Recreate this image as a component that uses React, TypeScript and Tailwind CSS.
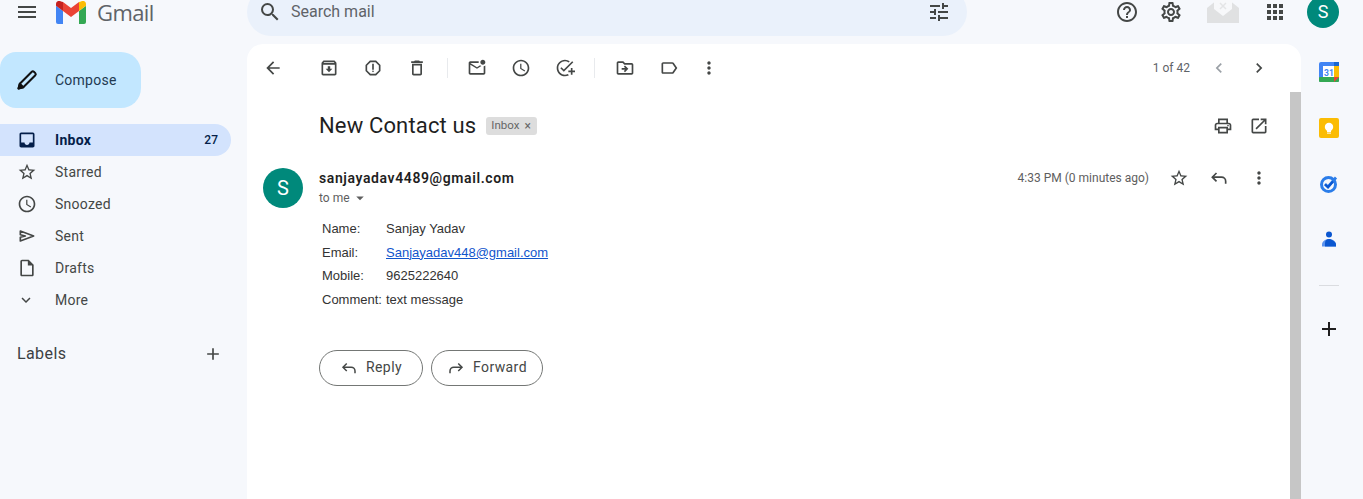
import React from "react";
import {
  MdMenu, MdSearch, MdTune, MdHelpOutline, MdOutlineSettings, MdApps, MdArrowBack, MdOutlineArchive,
  MdOutlineReport, MdOutlineDelete, MdOutlineMarkEmailUnread, MdOutlineWatchLater, MdOutlineAddTask,
  MdOutlineDriveFileMove, MdOutlineLabel, MdMoreVert, MdChevronLeft, MdChevronRight, MdOutlinePrint,
  MdOpenInNew, MdStarBorder, MdInbox, MdOutlineInsertDriveFile, MdExpandMore, MdAdd, MdArrowDropDown,
} from "react-icons/md";

const ReplyIcon = ({ size = 20, flip = false }: { size?: number; flip?: boolean }) => (
  <svg width={size} height={size} viewBox="0 0 24 24" fill="none" stroke="currentColor" strokeWidth="2" style={flip ? { transform: "scaleX(-1)" } : undefined}>
    <path d="M9 6 4 11l5 5" />
    <path d="M4.5 11H15a5 5 0 0 1 5 5v3" />
  </svg>
);

const SentIcon = () => (
  <svg width="20" height="20" viewBox="0 0 24 24" fill="none" stroke="currentColor" strokeWidth="2" strokeLinejoin="round">
    <path d="M4 6 20 12 4 18v-4.500L10 12 4 10.500z" />
  </svg>
);

const PencilIcon = () => (
  <svg width="24" height="24" viewBox="0 0 24 24" fill="none" stroke="#111111" strokeWidth="2" strokeLinejoin="round">
    <path d="M3.500 20.500l1.300-4.800L16.800 3.700a1.500 1.500 0 0 1 2.100 0l1.400 1.400a1.500 1.500 0 0 1 0 2.100L8.300 19.200z" />
    <path d="M3.500 20.500l4.800-1.300-3.500-3.500z" fill="#111111" />
  </svg>
);

const GmailLogo = () => (
  <svg width="30" height="23" viewBox="0 0 30 23">
    <path d="M2 23h5V10L0 4.700V21a2 2 0 0 0 2 2z" fill="#4285f4" />
    <path d="M23 23h5a2 2 0 0 0 2-2V4.700L23 10z" fill="#34a853" />
    <path d="M23 1v9l7-5.300V3c0-2.800-3-4-5-2.500z" fill="#fbbc04" />
    <path d="M7 10V1l8 6 8-6v9l-8 6z" fill="#ea4335" />
    <path d="M0 3v1.700L7 10V1L5 .5C3-1 0 .2 0 3z" fill="#c5221f" />
  </svg>
);

const MailGhost = () => (
  <svg width="32" height="24" viewBox="0 0 32 24">
    <path d="M0 8 10 0h12l10 8v15H0z" fill="#e0e1e2" />
    <path d="M7 0h18v9l-9 7-9-7z" fill="#f7f8fa" />
    <path d="M13 3l6 6M19 3l-6 6" stroke="#e4e5e6" strokeWidth="1.500" />
  </svg>
);

const CalendarIcon = () => (
  <svg width="20" height="20" viewBox="0 0 20 20">
    <rect x="0" y="0" width="20" height="20" rx="2" fill="#4285f4" />
    <rect x="4" y="4" width="12" height="12" fill="#fff" />
    <rect x="15" y="4" width="5" height="12" fill="#fbbc04" />
    <rect x="0" y="15" width="20" height="5" rx="1" fill="#34a853" />
    <path d="M15 20l5-5h-5z" fill="#ea4335" />
    <rect x="15" y="0" width="5" height="4" fill="#1967d2" />
    <text x="10" y="13.500" textAnchor="middle" fontSize="8.500" fontWeight="700" fontFamily="Roboto, sans-serif" fill="#4285f4">31</text>
  </svg>
);

const KeepIcon = () => (
  <svg width="20" height="20" viewBox="0 0 20 20">
    <rect width="20" height="20" rx="2" fill="#fbbc04" />
    <circle cx="10" cy="9" r="4.200" fill="#fff" />
    <rect x="8" y="12" width="4" height="2" fill="#fff" />
    <rect x="8" y="14.600" width="4" height="1" fill="#fff" />
  </svg>
);

const TasksIcon = () => (
  <svg width="20" height="20" viewBox="0 0 20 20" fill="none">
    <circle cx="9.500" cy="10.500" r="7" stroke="#2b7de9" strokeWidth="3" />
    <path d="M6 10l3 3 8-9.500" stroke="#2b7de9" strokeWidth="2.800" />
    <path d="M6 10.500l3 2.600 5-5.600" stroke="#0b57d0" strokeWidth="2.200" />
  </svg>
);

const ContactsIcon = () => (
  <svg width="20" height="20" viewBox="0 0 20 20">
    <circle cx="10" cy="4.500" r="3" fill="#0b57d0" />
    <path d="M3 16.500v-2C3 11.500 6 9 10 9s7 2.500 7 5.500v2z" fill="#5b93ee" />
    <path d="M6 16.500v-3.500C6 10.500 8 9 10 9s7 2.500 7 5.500v2z" fill="#0b57d0" />
  </svg>
);

const navItems = [
  { label: "Starred", icon: <MdStarBorder size={20} /> },
  { label: "Snoozed", icon: <MdOutlineWatchLater size={20} /> },
  { label: "Sent", icon: <SentIcon /> },
  { label: "Drafts", icon: <MdOutlineInsertDriveFile size={20} /> },
  { label: "More", icon: <MdExpandMore size={18} /> },
];

const Tool = ({ children, w = "w-[44px]" }: { children: React.ReactNode; w?: string }) => (
  <div className={`${w} h-[40px] flex items-center justify-center shrink-0 text-[#444746]`}>{children}</div>
);

const Divider = () => <div className="w-px h-[20px] bg-[#e8eaed] shrink-0" />;

const rows: [string, React.ReactNode][] = [
  ["Name:", "Sanjay Yadav"],
  ["Email:", <a key="m" className="text-[#1155cc] underline">Sanjayadav448@gmail.com</a>],
  ["Mobile:", "9625222640"],
  ["Comment:", "text message"],
];

export default function App() {
  return (
    <div className="w-full h-[499px] overflow-hidden bg-[#f6f8fc] flex flex-col font-['Roboto',sans-serif]">
      {/* Header */}
      <header className="h-[44px] shrink-0 flex items-start">
        <div className="w-[247px] shrink-0 h-[24px] flex items-center pl-[15px] text-[#444746]">
          <MdMenu size={24} />
          <div className="ml-[17px]"><GmailLogo /></div>
          <span className="ml-[11px] text-[22px] leading-[24px] text-[#5f6368] font-['Open_Sans',sans-serif] tracking-[-0.6px]">Gmail</span>
        </div>
        <div className="w-[720px] shrink-0 h-[48px] -mt-[12px] rounded-[24px] bg-[#eaf1fb] flex items-center pl-[11px] pr-[16px] text-[#444746]">
          <MdSearch size={24} />
          <span className="ml-[9px] text-[16px] text-[#5f6368]">Search mail</span>
          <div className="ml-auto"><MdTune size={24} /></div>
        </div>
        <div className="flex-1 h-[24px] flex items-center text-[#444746] pl-[148px]">
          <MdHelpOutline size={24} />
          <MdOutlineSettings size={24} className="ml-[20px]" />
          <div className="ml-[24px] w-[32px] h-[24px] flex items-center"><MailGhost /></div>
          <MdApps size={24} className="ml-[24px]" />
          <div className="ml-[20px] w-[32px] h-[32px] rounded-full bg-[#00897b] text-white flex items-center justify-center text-[18px] leading-[20px] shrink-0">S</div>
        </div>
      </header>

      <div className="flex flex-1 min-h-0">
        {/* Sidebar */}
        <aside className="w-[247px] shrink-0 pt-[8px] flex flex-col">
          <div className="w-[141px] h-[56px] rounded-r-[20px] rounded-l-[16px] bg-[#c2e7ff] flex items-center pl-[15px] text-[14px] text-[#1f3a52]">
            <PencilIcon />
            <span className="ml-[16px] tracking-[0.25px]">Compose</span>
          </div>
          <div className="mt-[16px] w-[231px] h-[32px] rounded-r-[16px] bg-[#d3e3fd] flex items-center text-[#041e49] text-[14px]">
            <div className="w-[55px] pl-[17px] shrink-0"><MdInbox size={20} /></div>
            <span className="font-bold tracking-[0.3px]">Inbox</span>
            <span className="ml-auto mr-[13px] text-[12px] font-medium">27</span>
          </div>
          {navItems.map((n) => (
            <div key={n.label} className="w-[231px] h-[32px] flex items-center text-[#444746] text-[14px] tracking-[0.25px]">
              <div className="w-[55px] pl-[17px] shrink-0">{n.icon}</div>
              <span>{n.label}</span>
            </div>
          ))}
          <div className="mt-[22px] w-[231px] h-[32px] flex items-center justify-between pl-[17px] pr-[8px] text-[#444746]">
            <span className="text-[16px] text-[#3c4043] tracking-[0.4px]">Labels</span>
            <MdAdd size={20} />
          </div>
        </aside>

        {/* Main panel */}
        <main className="w-[1054px] shrink-0 bg-white rounded-t-[16px] flex flex-col min-h-0">
          <div className="h-[48px] shrink-0 flex items-center pl-[4px] pr-[23px]">
            <Tool><MdArrowBack size={20} /></Tool>
            <div className="w-[12px] shrink-0" />
            <Tool><MdOutlineArchive size={20} /></Tool>
            <Tool><MdOutlineReport size={20} /></Tool>
            <Tool><MdOutlineDelete size={20} /></Tool>
            <div className="w-[8px] shrink-0" />
            <Divider />
            <div className="w-[7px] shrink-0" />
            <Tool><MdOutlineMarkEmailUnread size={20} /></Tool>
            <Tool><MdOutlineWatchLater size={20} /></Tool>
            <Tool><MdOutlineAddTask size={20} /></Tool>
            <div className="w-[7px] shrink-0" />
            <Divider />
            <div className="w-[8px] shrink-0" />
            <Tool><MdOutlineDriveFileMove size={20} /></Tool>
            <Tool><MdOutlineLabel size={20} /></Tool>
            <Tool w="w-[36px]"><MdMoreVert size={20} /></Tool>
            <span className="ml-auto text-[12px] text-[#5f6368]">1 of 42</span>
            <Tool w="w-[40px]"><span className="text-[#9aa0a6] ml-[18px]"><MdChevronLeft size={20} /></span></Tool>
            <Tool w="w-[40px]"><span className="ml-[18px]"><MdChevronRight size={20} /></span></Tool>
            <div className="w-[8px] shrink-0" />
          </div>

          <div className="flex flex-1 min-h-0">
            <div className="flex-1 min-w-0">
              <div className="h-[36px] mt-[16px] pl-[72px] pr-[13px] flex items-center text-[#444746]">
                <h1 className="text-[22px] font-normal leading-[28px] text-[#1f1f1f] tracking-[0.15px]">New Contact us</h1>
                <div className="ml-[10px] h-[18px] px-[5px] w-[51px] rounded-[3px] bg-[#dddddd] flex items-center text-[11.500px] text-[#666666]">
                  Inbox <span className="ml-[5px] text-[12px]">×</span>
                </div>
                <div className="ml-auto flex items-center">
                  <Tool w="w-[36px]"><MdOutlinePrint size={20} /></Tool>
                  <Tool w="w-[36px]"><MdOpenInNew size={20} /></Tool>
                </div>
              </div>

              <div className="mt-[24px] pl-[16px] pr-[13px] flex items-start">
                <div className="w-[40px] h-[40px] rounded-full bg-[#00897b] text-white text-[20px] flex items-center justify-center shrink-0">S</div>
                <div className="ml-[16px]">
                  <div className="h-[20px] leading-[20px] text-[14px] font-semibold text-[#1f1f1f] tracking-[0.6px]">sanjayadav4489@gmail.com</div>
                  <div className="h-[20px] flex items-center text-[12px] text-[#5e5e5e]">to me <MdArrowDropDown size={18} className="ml-[1px]" /></div>
                </div>
                <div className="ml-auto flex items-center h-[20px] text-[#444746]">
                  <span className="text-[12px] text-[#5e5e5e] mr-[12px]">4:33 PM (0 minutes ago)</span>
                  <Tool w="w-[36px]"><MdStarBorder size={20} /></Tool>
                  <Tool w="w-[44px]"><ReplyIcon /></Tool>
                  <Tool w="w-[36px]"><MdMoreVert size={20} /></Tool>
                </div>
              </div>

              <div className="mt-[9px] ml-[75px] font-['Liberation_Sans',sans-serif] text-[13px] text-[#333333]">
                {rows.map(([k, v]) => (
                  <div key={k} className="h-[23.700px] flex items-center">
                    <span className="w-[64px] shrink-0">{k}</span>
                    <span>{v}</span>
                  </div>
                ))}
              </div>

              <div className="mt-[38px] ml-[72px] flex gap-[8px] text-[14px] text-[#444746] tracking-[0.4px]">
                <div className="w-[104px] h-[36px] rounded-[18px] border border-[#747775] flex items-center justify-center gap-[8px]">
                  <ReplyIcon size={18} /> Reply
                </div>
                <div className="w-[112px] h-[36px] rounded-[18px] border border-[#747775] flex items-center justify-center gap-[8px]">
                  <ReplyIcon size={18} flip /> Forward
                </div>
              </div>
            </div>
            <div className="w-[11px] shrink-0 bg-[#c6c6c6]" />
          </div>
        </main>

        {/* Right rail */}
        <aside className="flex-1 flex flex-col pt-[18px]">
          <div className="w-[56px] h-[20px] flex items-center justify-center"><CalendarIcon /></div>
          <div className="w-[56px] h-[20px] mt-[36px] flex items-center justify-center"><KeepIcon /></div>
          <div className="w-[56px] h-[20px] mt-[36px] flex items-center justify-center"><TasksIcon /></div>
          <div className="w-[56px] h-[20px] mt-[36px] flex items-center justify-center"><ContactsIcon /></div>
          <div className="w-[20px] ml-[18px] h-px bg-[#dadce0] mt-[35px]" />
          <div className="w-[56px] h-[24px] mt-[31px] flex items-center justify-center text-[#1f1f1f]"><MdAdd size={24} /></div>
        </aside>
      </div>
    </div>
  );
}
